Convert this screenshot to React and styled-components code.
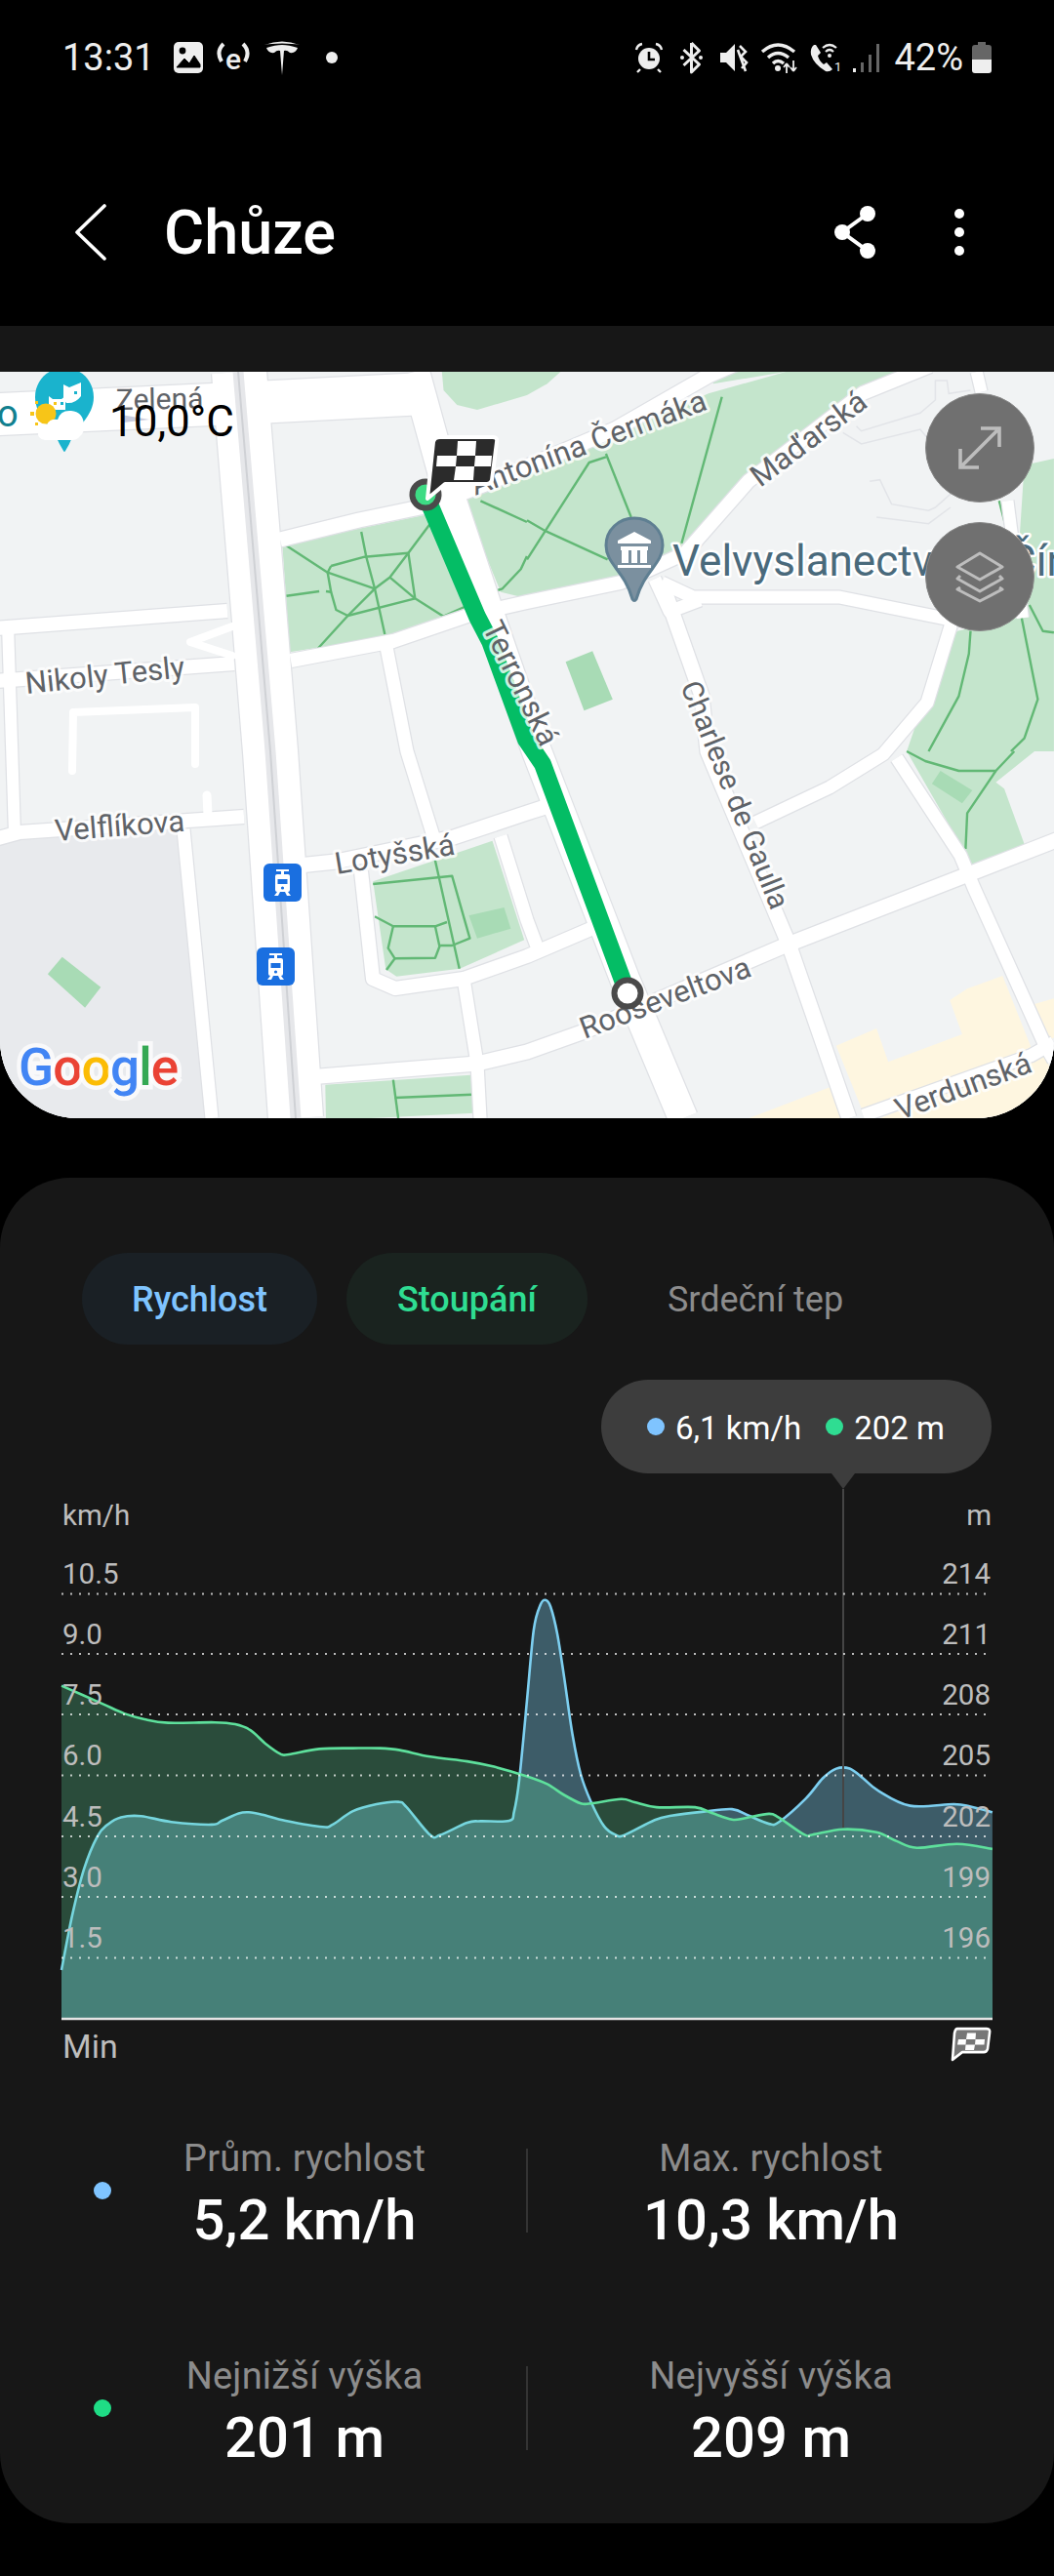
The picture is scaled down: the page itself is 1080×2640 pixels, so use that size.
import styled, { createGlobalStyle } from "styled-components";

const GlobalStyle = createGlobalStyle`
  html, body { margin: 0; padding: 0; background: #000; }
  * { box-sizing: border-box; }
`;

const Page = styled.div`
  width: 1080px;
  height: 2640px;
  background: #000;
  overflow: hidden;
  font-family: Roboto, "Noto Sans", sans-serif;
  color: #fff;
`;

const StatusBar = styled.div`
  height: 118px;
  padding: 0 64px;
  display: flex;
  align-items: center;
`;

const Clock = styled.span`
  font-size: 38px;
  margin-right: 19px;
  color: #eee;
  white-space: nowrap;
`;

const StatusGroup = styled.div`
  display: flex;
  align-items: center;
  gap: ${(p) => p.$gap || 12}px;
  margin-left: ${(p) => (p.$right ? "auto" : "0")};
  svg { display: block; }
`;

const Percent = styled.span`
  font-size: 38px;
  margin-left: 3px;
  color: #eee;
  white-space: nowrap;
`;

const AppBar = styled.header`
  height: 216px;
  padding: 24px 0 0 74px;
  display: flex;
  align-items: center;
  svg { display: block; }
`;

const Title = styled.h1`
  margin: 0 0 0 56px;
  font-size: 63px;
  font-weight: 500;
`;

const AppBarActions = styled.div`
  margin-left: auto;
  margin-right: 91px;
  display: flex;
  align-items: center;
  gap: 79px;
`;

const Band = styled.div`
  height: 47px;
  background: #171717;
`;

const MapPanel = styled.section`
  position: relative;
  height: 765px;
  overflow: hidden;
  border-radius: 0 0 80px 80px;
  background: #f1f3f4;
  svg { display: block; }
`;

const Temperature = styled.span`
  position: absolute;
  left: 112px;
  top: 26px;
  font-size: 44px;
  line-height: 50px;
  color: #000;
`;

const RoundButton = styled.div`
  position: absolute;
  right: 20px;
  top: ${(p) => p.$top}px;
  width: 112px;
  height: 112px;
  border-radius: 50%;
  background: #707070;
  border: 1px solid #8a8a8a;
  display: flex;
  align-items: center;
  justify-content: center;
`;

const GoogleMark = styled.div`
  position: absolute;
  left: 19px;
  bottom: 22px;
  font-size: 53px;
  font-weight: 500;
  line-height: 60px;
  letter-spacing: -0.8px;
  -webkit-text-stroke: 9px rgba(255, 255, 255, 0.72);
  paint-order: stroke fill;
`;

const GoogleLetter = styled.span`
  color: ${(p) => p.$color};
  paint-order: stroke fill;
`;

const Card = styled.section`
  margin-top: 61px;
  background: #171717;
  border-radius: 72px;
  padding: 77px 0 56px;
`;

const Tabs = styled.div`
  display: flex;
  gap: 30px;
  padding-left: 84px;
`;

const Tab = styled.div`
  height: 94px;
  padding: 2px ${(p) => p.$pad}px 0;
  border-radius: 47px;
  background: ${(p) => p.$bg || "transparent"};
  color: ${(p) => p.$color};
  font-size: 36px;
  font-weight: ${(p) => p.$weight || 500};
  display: flex;
  align-items: center;
`;

const TooltipRow = styled.div`
  margin-top: 36px;
  padding-right: 64px;
  display: flex;
  justify-content: flex-end;
`;

const Tooltip = styled.div`
  position: relative;
  width: 400px;
  height: 96px;
  padding-left: 47px;
  border-radius: 48px;
  background: #3d3d3d;
  display: flex;
  align-items: center;
  font-size: 33px;

  &::after {
    content: "";
    position: absolute;
    left: 236px;
    top: 96px;
    border: 12px solid transparent;
    border-top: 16px solid #3d3d3d;
    border-bottom: 0;
  }
`;

const Dot = styled.span`
  flex: none;
  width: 18px;
  height: 18px;
  border-radius: 50%;
  background: ${(p) => p.$color};
`;

const TipValue = styled.span`
  margin: 2px ${(p) => p.$after || 0}px 0 11px;
  white-space: nowrap;
`;

const Chart = styled.svg`
  display: block;
  width: 1080px;
  height: 561px;
`;

const AxisFoot = styled.div`
  height: 47px;
  padding: 5px 64px 0;
  display: flex;
  justify-content: space-between;
  align-items: flex-start;
  font-size: 34px;
  line-height: 42px;
  color: #bdbdbd;
  svg { display: block; margin-top: 1px; }
`;

const Stats = styled.div`
  margin-top: 73px;
  display: flex;
  flex-direction: column;
  gap: 107px;
`;

const StatRow = styled.div`
  height: 116px;
  padding-left: 84px;
  display: flex;
  align-items: flex-start;
`;

const DotCell = styled.div`
  width: 42px;
  margin-top: 45px;
  display: flex;
  justify-content: center;
`;

const Stat = styled.div`
  width: ${(p) => p.$width}px;
  text-align: center;
`;

const StatLabel = styled.div`
  font-size: 38px;
  line-height: 42px;
  letter-spacing: 0.2px;
  color: #8c8c8c;
  white-space: nowrap;
`;

const StatValue = styled.div`
  margin-top: 10px;
  font-size: 58px;
  line-height: 64px;
  font-weight: 500;
  white-space: nowrap;
`;

const Divider = styled.div`
  width: 2px;
  height: 86px;
  margin: 11px 0 0 41px;
  background: #333;
`;

// zoom crop -> page px
const at = (ox, oy, ky = 3) => (x, y) => [ox + x / 2.904, oy + y / ky];
const A = at(0, 370);
const B = at(540, 370);
const C = at(0, 770);
const D = at(540, 770);
const L = at(0, 1520, 2.529);
const R = at(540, 1520, 2.529);

const toD = (pts, close) =>
  "M" + pts.map((p) => p[0].toFixed(1) + " " + p[1].toFixed(1)).join("L") + (close ? "Z" : "");

const pts = (f, list) => list.map((p) => f(p[0], p[1]));

// catmull-rom through the points
const smooth = (p) => {
  let d = `M${p[0][0].toFixed(1)} ${p[0][1].toFixed(1)}`;
  for (let i = 0; i < p.length - 1; i++) {
    const p0 = p[i - 1] || p[i];
    const p1 = p[i];
    const p2 = p[i + 1];
    const p3 = p[i + 2] || p2;
    const c1 = [p1[0] + (p2[0] - p0[0]) / 6, p1[1] + (p2[1] - p0[1]) / 6];
    const c2 = [p2[0] - (p3[0] - p1[0]) / 6, p2[1] - (p3[1] - p1[1]) / 6];
    d += `C${c1[0].toFixed(1)} ${c1[1].toFixed(1)} ${c2[0].toFixed(1)} ${c2[1].toFixed(1)} ${p2[0].toFixed(1)} ${p2[1].toFixed(1)}`;
  }
  return d;
};

const parks = [
  pts(A, [[840, 563], [1280, 470], [1385, 760], [1170, 845], [862, 895]]),
  [...pts(A, [[1315, 33], [1320, 90], [1360, 135], [1420, 150], [1568, 105]]), ...pts(B, [[60, 70], [100, 33]])],
  [...pts(A, [[1375, 420], [1490, 710]]), ...pts(B, [[0, 730], [280, 670], [470, 560], [660, 360], [1000, 75], [1120, 33], [770, 33], [540, 100], [0, 345]])],
  pts(B, [[540, 33], [555, 70], [770, 33]]),
  [...pts(B, [[1480, 320], [1568, 300], [1568, 1200]]), ...pts(D, [[1510, 0], [1395, 95], [1420, 115], [1485, 300], [1330, 360], [1130, 0]]), ...pts(B, [[1200, 990], [1280, 830], [1450, 790]])],
  pts(C, [[1110, 400], [1465, 275], [1560, 580], [1368, 668], [1180, 692], [1148, 670]]),
  pts(C, [[968, 1025], [1400, 995], [1412, 1112], [970, 1135]]),
];

const patches = [
  pts(B, [[115, 925], [195, 892], [255, 1040], [170, 1075]]),
  pts(C, [[185, 632], [300, 725], [253, 788], [142, 685]]),
  pts(C, [[1395, 505], [1500, 480], [1520, 545], [1420, 575]]),
  pts(D, [[1230, 60], [1325, 120], [1295, 160], [1205, 100]]),
];

const sand = [
  pts(D, [[920, 905], [1040, 852], [1075, 955], [1295, 870], [1258, 765], [1310, 730], [1415, 690], [1500, 910], [1000, 1110]]),
  pts(D, [[660, 1128], [920, 1025], [950, 1128]]),
  pts(D, [[1500, 780], [1568, 760], [1568, 880], [1540, 900]]),
  pts(D, [[1050, 1128], [1550, 930], [1568, 1128]]),
];

const parkPaths = [
  pts(A, [[848, 565], [975, 650], [1115, 700]]),
  pts(A, [[985, 630], [1085, 602], [1215, 590], [1235, 730], [1320, 785], [1385, 755]]),
  pts(A, [[1075, 525], [1090, 602], [1115, 700], [1145, 840]]),
  pts(A, [[985, 630], [975, 650], [985, 710], [1000, 765], [1035, 783], [1235, 730]]),
  pts(A, [[1280, 500], [1215, 590], [1160, 665], [1115, 700], [1035, 783], [945, 885]]),
  pts(A, [[1160, 665], [1235, 730]]),
  pts(A, [[852, 722], [950, 708]]),
  pts(A, [[970, 708], [985, 710]]),
  pts(B, [[580, 110], [460, 560]]),
  pts(B, [[235, 285], [310, 480]]),
  pts(B, [[235, 295], [185, 312], [0, 610]]),
  pts(A, [[1480, 705], [1495, 700], [1550, 640], [1568, 600]]),
  pts(B, [[0, 490], [50, 520], [240, 610]]),
  pts(A, [[1430, 430], [1568, 495]]),
  pts(B, [[1320, 830], [1315, 900], [1285, 1030], [1195, 1200]]),
  pts(D, [[1130, 0], [1185, 30], [1285, 60], [1395, 60], [1450, 0]]),
  pts(D, [[1395, 60], [1310, 190], [1305, 300]]),
  pts(B, [[1470, 780], [1520, 1040], [1480, 1160], [1440, 1200]]),
  pts(B, [[1495, 750], [1535, 830], [1568, 835]]),
  pts(B, [[1405, 430], [1425, 510]]),
  pts(C, [[1110, 408], [1345, 383], [1398, 575], [1345, 597], [1310, 597]]),
  pts(C, [[1295, 335], [1367, 668]]),
  pts(C, [[1115, 508], [1170, 538], [1295, 538], [1330, 525]]),
  pts(C, [[1170, 538], [1155, 605], [1175, 637], [1295, 635], [1308, 600], [1295, 538]]),
  pts(C, [[1175, 637], [1150, 672]]),
  pts(C, [[1170, 1010], [1185, 1128]]),
  pts(C, [[1175, 1065], [1405, 1055]]),
];

const roads = [
  { w: 43, p: [[-10, 425], [272, 412], [425, 404]] },
  { w: 56, p: [[245, 381], [277, 770], [303, 1146]] },
  { w: 15, p: [[287, 553], [368, 533], [440, 518], [500, 495], [630, 440], [726, 385], [760, 370]] },
  { w: 14, p: [[298, 677], [403, 657], [482, 630], [540, 617], [636, 597], [702, 567], [767, 493], [884, 403], [953, 375]] },
  { w: 13, p: [[678, 597], [710, 612], [860, 612], [974, 635], [974, 642], [950, 720], [905, 773], [850, 807], [774, 843]] },
  { w: 13, p: pts(B, [[380, 670], [425, 770], [515, 735]]) },
  { w: 15, p: [[678, 597], [719, 713], [725, 770], [808, 967], [870, 1146]] },
  { w: 30, p: [[425, 381], [455, 490], [505, 640], [550, 770], [640, 1003], [700, 1146]] },
  { w: 15, p: [[303, 1105], [489, 1090], [540, 1078], [599, 1057], [802, 970], [1090, 858]] },
  { w: 15, p: [[306, 887], [344, 883], [465, 858], [540, 833], [565, 825]] },
  { w: 14, p: [[610, 950], [540, 980], [475, 1003], [405, 1013], [382, 1003], [370, 893]] },
  { w: 13, p: [[475, 1003], [489, 1090], [492, 1146]] },
  { w: 13, p: [[396, 663], [417, 770], [444, 857]] },
  { w: 13, p: [[513, 857], [540, 943], [552, 975]] },
  { w: 14, p: [[-5, 644], [233, 626]] },
  { w: 14, p: [[-5, 698], [240, 680]] },
  { w: 14, p: [[-5, 860], [20, 853], [250, 837]] },
  { w: 12, p: [[8, 640], [15, 855]] },
  { w: 13, p: [[188, 850], [217, 1146]] },
  { w: 13, p: pts(D, [[1100, 20], [1290, 320], [1330, 420], [1540, 900], [1568, 950]]) },
  { w: 13, p: pts(D, [[1000, 1120], [1500, 935], [1568, 895]]) },
  { w: 12, p: pts(B, [[1338, 33], [1352, 95]]) },
  { w: 12, p: pts(B, [[1430, 430], [1475, 790]]) },
];

const courtyards = [
  { w: 8, p: [[200, 783], [200, 725], [75, 730], [74, 790]] },
  { w: 9, p: [[212, 815], [213, 835]] },
  { w: 8, p: [[238, 642], [195, 658], [238, 672]] },
];

const blockLines = [
  pts(B, [[1020, 370], [1050, 365], [1085, 440], [1195, 460], [1215, 450], [1270, 400]]),
  pts(B, [[940, 220], [995, 255], [1170, 210], [1190, 235]]),
  pts(B, [[980, 200], [995, 215], [1170, 160], [1215, 120], [1215, 60], [1250, 60], [1255, 100], [1320, 90]]),
  pts(B, [[1040, 480], [1195, 500], [1260, 450]]),
];

const route = [[436, 507], [489, 632], [502, 657], [539, 758], [556, 783], [643, 1018]];

const streetLabels = [
  { t: "Nikoly Tesly", x: 27, y: 711, r: -6, s: 31 },
  { t: "Velflíkova", x: 57, y: 862, r: -4.5, s: 31 },
  { t: "Lotyšská", x: 345, y: 896, r: -9.5, s: 31 },
  { t: "Antonína Čermáka", x: 487, y: 508, r: -20.4, s: 31 },
  { t: "Maďarská", x: 779, y: 500, r: -37, s: 31 },
  { t: "Terronská", x: 494, y: 643, r: 64, s: 31 },
  { t: "Charlese de Gaulla", x: 697, y: 703, r: 68, s: 30 },
  { t: "Rooseveltova", x: 599, y: 1065, r: -20.7, s: 31 },
  { t: "Verdunská", x: 922, y: 1148, r: -20, s: 31 },
];

const TramStop = ({ x, y }) => (
  <g transform={`translate(${x} ${y})`}>
    <rect width="39" height="39" rx="6" fill="#1a6fe0" />
    <path d="M13 6h13v2h-5v3h4q2 0 2 2v14q0 2-2 2h-11q-2 0-2-2v-14q0-2 2-2h4v-3h-5z" fill="#fff" />
    <rect x="14.5" y="16" width="10" height="5" fill="#1a6fe0" />
    <circle cx="19.5" cy="25" r="1.6" fill="#1a6fe0" />
    <path d="M14 29l-3 4h4l2-4zM25 29l3 4h-4l-2-4z" fill="#fff" />
  </g>
);

const MapDrawing = () => (
  <svg width="1080" height="765" viewBox="0 381 1080 765">
    <rect x="0" y="381" width="1080" height="765" fill="#f1f3f4" />
    <path d="M0 862L20 855L183 845L211 1146L0 1146Z" fill="#e8eaed" />
    {sand.map((p, i) => <path key={i} d={toD(p, true)} fill="#fef6e0" />)}
    {parks.map((p, i) => <path key={i} d={toD(p, true)} fill="#c4e5cc" />)}
    {patches.map((p, i) => <path key={i} d={toD(p, true)} fill="#a8dbb5" />)}
    <g fill="none" stroke="#62b875" strokeWidth="2.4" strokeLinejoin="round">
      {parkPaths.map((p, i) => <path key={i} d={toD(p)} />)}
    </g>
    <g fill="none" stroke="#e2e4e8" strokeWidth="1.5">
      {blockLines.map((p, i) => <path key={i} d={toD(p)} />)}
    </g>
    <g fill="none" stroke="#dfe1e5" strokeLinejoin="round">
      {roads.map((r, i) => <path key={i} d={toD(r.p)} strokeWidth={r.w + 2.5} />)}
    </g>
    <g fill="none" stroke="#fff" strokeLinejoin="round">
      {roads.map((r, i) => <path key={i} d={toD(r.p)} strokeWidth={r.w} />)}
    </g>
    <g fill="none" stroke="#fff" strokeLinecap="round" strokeLinejoin="round">
      {courtyards.map((r, i) => <path key={i} d={toD(r.p)} strokeWidth={r.w} />)}
    </g>
    <path d="M244 381L277 770L303 1146" fill="none" stroke="#e6e7ea" strokeWidth="11" />
    <path d="M244 381L277 770L303 1146" fill="none" stroke="#cfd1d5" strokeWidth="2" />

    <path d={toD(pts(A, [[360, 165], [445, 180], [360, 190]]), true)} fill="#c8cbdc" />

    <path d={toD(route)} fill="none" stroke="#04bd65" strokeWidth="18" strokeLinejoin="round" />

    <g fontFamily="Roboto, sans-serif" fill="#5f6368" stroke="#fff" strokeWidth="6" strokeOpacity="0.8" strokeLinejoin="round" paintOrder="stroke">
      {streetLabels.map((l) => (
        <text key={l.t} x={l.x} y={l.y} fontSize={l.s} transform={`rotate(${l.r} ${l.x} ${l.y})`}>{l.t}</text>
      ))}
    </g>
    <text x="119" y="420" fontFamily="Roboto, sans-serif" fontSize="30" fill="#5f6368" transform="rotate(-1 119 420)">Zelená</text>
    <g fontFamily="Roboto, sans-serif" fontSize="44" fill="#4a6a7c" stroke="#fff" strokeWidth="5" strokeLinejoin="round" paintOrder="stroke">
      <text x="689" y="590">Velvyslanectví</text>
      <text x="1033" y="590">Čína</text>
    </g>

    <circle cx="643" cy="1018" r="13.5" fill="#fff" stroke="#4a4a4a" strokeWidth="6" />
    <circle cx="436" cy="507" r="13.5" fill="#3ddc84" stroke="#4a4a4a" strokeWidth="6" />
    <path d="M451 448H505Q510 448 509 453L504 492Q503 496 499 496H456L438 511L444 453Q445 448 451 448Z" fill="#2b2b2b" stroke="#fff" strokeWidth="4" strokeLinejoin="round" />
    <g fill="#fff">
      <path d="M469 452H488L487 467H468Z" />
      <path d="M448 467H468L467 478H447Z" />
      <path d="M487 467H504L503 478H486Z" />
      <path d="M467 478H486L485 492H465Z" />
    </g>

    {/* embassy pin */}
    <path d="M650 531c-16 0-29 12-29 28 0 19 19 26 27 55q2 3 4 0c8-29 27-36 27-55 0-16-13-28-29-28z" fill="#7b909f" stroke="#5f7f92" strokeWidth="3" />
    <g fill="#fff">
      <path d="M650 545l17 9v3h-34v-3z" />
      <rect x="636" y="560" width="28" height="4" />
      <rect x="637" y="564" width="7" height="13" />
      <rect x="647" y="564" width="6" height="13" />
      <rect x="656" y="564" width="7" height="13" />
      <rect x="633" y="579" width="34" height="3" />
    </g>

    <TramStop x={270} y={885} />
    <TramStop x={263} y={971} />

    {/* weather pin */}
    <text x="-3" y="437" fontFamily="Roboto, sans-serif" fontSize="38" fill="#12808f">o</text>
    <path d="M66 377c-17 0-30 13-30 30 0 20 18 30 25 48l4 7q1 2 2 0l4-7c7-18 25-28 25-48 0-17-13-30-30-30z" fill="#1ab3cd" />
    <path d="M65 394l6 3 12-5v14q-6 8-15 7l-3-4z" fill="#fff" />
    <path d="M50 406l4 3h9l4-3v14h-17z" fill="#fff" />
    <rect x="55" y="412" width="3" height="3" fill="#f7c518" />
    <rect x="62" y="412" width="3" height="3" fill="#1ab3cd" />
    <rect x="76" y="401" width="3" height="3" fill="#1ab3cd" />
    <circle cx="47" cy="424" r="10.5" fill="#f7c518" />
    <g fill="#f7c518">
      <rect x="31" y="422" width="4" height="4" />
      <rect x="36" y="433" width="3" height="3" />
      <rect x="36" y="411" width="3" height="3" />
    </g>
    <path d="M46 451q-8-1-7-9 1-8 9-7 3-6 11-5 3-10 14-9 12 1 13 14 1 8-4 12-3 4-8 4z" fill="#fff" />
  </svg>
);

const blueLine = [
  ...pts(L, [[183, 1262], [215, 1120], [250, 1000], [290, 915], [320, 885], [360, 866], [420, 863], [510, 878], [630, 885], [660, 875], [710, 856], [740, 853], [780, 859], [850, 875], [960, 891], [990, 885], [1050, 850], [1120, 832], [1185, 826], [1210, 840], [1280, 912], [1310, 912], [1390, 880], [1430, 876], [1515, 875], [1530, 850], [1545, 770], [1568, 565]]),
  ...pts(R, [[20, 380], [40, 315], [55, 303], [70, 320], [90, 390], [110, 500], [135, 650], [160, 755], [190, 825], [230, 890], [265, 912], [290, 912], [380, 873], [430, 862], [520, 852], [610, 845], [660, 862], [720, 883], [750, 878], [830, 817], [880, 765], [920, 740], [960, 740], [1000, 765], [1045, 797], [1140, 836], [1270, 832], [1320, 838], [1385, 853]]),
];

const greenLine = [
  ...pts(L, [[183, 525], [300, 570], [370, 597], [430, 612], [500, 621], [640, 620], [700, 625], [745, 640], [790, 675], [835, 702], [860, 703], [950, 689], [1050, 687], [1130, 687], [1190, 692], [1280, 709], [1390, 721], [1470, 735]]),
  ...pts(R, [[0, 760], [60, 780], [110, 808], [160, 830], [190, 830], [280, 819], [320, 827], [385, 840], [500, 840], [550, 855], [610, 872], [650, 868], [720, 857], [750, 867], [825, 911], [850, 911], [940, 897], [1040, 905], [1100, 928], [1160, 945], [1280, 935], [1385, 948]]),
];

const CHART_LEFT = 63;
const CHART_RIGHT = 1017;
const BASELINE = 2068;

const closeArea = (d) => `${d}L${CHART_RIGHT} ${BASELINE}L${CHART_LEFT} ${BASELINE}Z`;

const gridLines = [
  { y: 1633.5, km: "10.5", m: "214" },
  { y: 1695, km: "9.0", m: "211" },
  { y: 1757, km: "7.5", m: "208" },
  { y: 1819.5, km: "6.0", m: "205" },
  { y: 1882, km: "4.5", m: "202" },
  { y: 1944, km: "3.0", m: "199" },
  { y: 2006.5, km: "1.5", m: "196" },
];

const SpeedChart = () => (
  <Chart viewBox="0 1510 1080 561">
    <path d={closeArea(smooth(blueLine))} fill="rgba(132,220,255,.35)" />
    <path d={smooth(blueLine)} fill="none" stroke="#7dcff0" strokeWidth="2.6" />
    <path d={closeArea(smooth(greenLine))} fill="rgba(99,235,167,.25)" />
    <path d={smooth(greenLine)} fill="none" stroke="#5ee09c" strokeWidth="2.6" />
    <path d="M864 1526V1873" stroke="#454545" strokeWidth="2" />
    <g stroke="#fff" strokeOpacity="0.72" strokeWidth="2" strokeDasharray="2 7">
      {gridLines.map((g) => <path key={g.y} d={`M63 ${g.y}H1010`} />)}
    </g>
    <path d={`M63 ${BASELINE + 1}H1017`} stroke="#e4e4e4" strokeWidth="2.5" />
    <g fontFamily="Roboto, sans-serif" fontSize="29.5" fill="#bdbdbd">
      <text x="64" y="1563">km/h</text>
      <text x="1016" y="1563" textAnchor="end">m</text>
      {gridLines.map((g) => (
        <g key={g.y}>
          <text x="64" y={g.y - 10.5}>{g.km}</text>
          <text x="1015" y={g.y - 10.5} textAnchor="end">{g.m}</text>
        </g>
      ))}
    </g>
  </Chart>
);

const FinishFlag = () => (
  <svg width="42" height="36" viewBox="0 0 42 33" preserveAspectRatio="none">
    <path d="M7 2H37Q41 2 40 6L38 21Q37 24 34 24H12L2 31L4 6Q5 2 7 2Z" fill="#777" stroke="#fff" strokeWidth="2.6" strokeLinejoin="round" />
    <g fill="#fff">
      <path d="M17 6H26L25.500 12H16Z" />
      <path d="M8 12H16L15.500 17H7Z" />
      <path d="M25.500 12H35L34.500 17H25Z" />
      <path d="M15.500 17H25L24 22H15Z" />
    </g>
  </svg>
);

const stats = [
  { color: "#7fc4ff", a: ["Prům. rychlost", "5,2 km/h"], b: ["Max. rychlost", "10,3 km/h"] },
  { color: "#1fdc85", a: ["Nejnižší výška", "201 m"], b: ["Nejvyšší výška", "209 m"] },
];

export default function App() {
  return (
    <Page>
      <GlobalStyle />
      <StatusBar>
        <Clock>13:31</Clock>
        <StatusGroup $gap={13}>
          <svg width="30" height="32" viewBox="0 0 30 32">
            <rect width="30" height="32" rx="5" fill="#eee" />
            <circle cx="9" cy="9" r="3.4" fill="#000" />
            <path d="M3 26l8-9 5 5 5-8 6 9v3H3z" fill="#000" stroke="#000" strokeWidth="1" />
          </svg>
          <svg width="36" height="32" viewBox="0 0 36 32">
            <text x="18" y="28" textAnchor="middle" fontFamily="Roboto, sans-serif" fontSize="30" fontWeight="500" fill="#eee">e</text>
            <path d="M8 2Q0 10 6 20M28 2Q36 10 30 20" fill="none" stroke="#eee" strokeWidth="4" />
          </svg>
          <svg width="38" height="36" viewBox="0 0 38 36">
            <path d="M1 5Q19-2 37 5Q30 3.500 19 3.500Q8 3.500 1 5Z" fill="#eee" />
            <path d="M3 8Q12 5 19 5Q26 5 35 8Q33 14 27 13Q24 10 21 11L19 36L17 11Q14 10 11 13Q5 14 3 8Z" fill="#eee" />
          </svg>
          <svg width="12" height="12" viewBox="0 0 12 12" style={{ marginLeft: 13 }}>
            <circle cx="6" cy="6" r="6" fill="#eee" />
          </svg>
        </StatusGroup>
        <StatusGroup $right $gap={11}>
          <svg width="30" height="32" viewBox="0 0 30 32">
            <circle cx="15" cy="17" r="11" fill="#eee" />
            <path d="M15 10v8h6" fill="none" stroke="#000" strokeWidth="2.6" />
            <path d="M2 8Q3 3 8 2M28 8Q27 3 22 2M6 28l-3 3M24 28l3 3" fill="none" stroke="#eee" strokeWidth="2.4" />
          </svg>
          <svg width="27" height="34" viewBox="0 0 27 34" style={{ marginLeft: 4 }}>
            <path d="M13.500 2v30l8-8-16-15M13.500 2l8 8-16 15" fill="none" stroke="#eee" strokeWidth="3" strokeLinejoin="round" />
            <circle cx="4" cy="17" r="2" fill="#eee" />
            <circle cx="23" cy="17" r="2" fill="#eee" />
          </svg>
          <svg width="31" height="32" viewBox="0 0 31 32" style={{ marginLeft: 4 }}>
            <path d="M1 11h6l9-9v28l-9-9H1z" fill="#eee" />
            <path d="M21 4l6 6-5 5 6 6-5 6M19 8l8 22" fill="none" stroke="#eee" strokeWidth="2.6" />
          </svg>
          <svg width="40" height="34" viewBox="0 0 40 34">
            <path d="M2 11Q18-3 35 11M8 17Q18 8 29 17M13 23Q18 18 24 23" fill="none" stroke="#eee" strokeWidth="3.4" />
            <circle cx="18" cy="28" r="3" fill="#eee" />
            <path d="M27 33V23M27 23l-3 4M27 23l3 4M34 20v11M34 31l-3-4M34 31l3-4" fill="none" stroke="#eee" strokeWidth="1.8" />
          </svg>
          <svg width="32" height="32" viewBox="0 0 32 32">
            <path d="M4 3q-4 3-3 10 3 10 15 17 4 1 7-2l-6-7-3 2q-5-4-6-9l3-3-5-8z" fill="#eee" />
            <path d="M13 6Q20 0 27 6M16 10Q20 6 24 10" fill="none" stroke="#eee" strokeWidth="2.2" />
            <circle cx="20" cy="14" r="2" fill="#eee" />
            <text x="25" y="30" fontFamily="Roboto, sans-serif" fontSize="13" fill="#eee">1</text>
          </svg>
          <svg width="29" height="32" viewBox="0 0 29 32">
            <rect x="1" y="27" width="3" height="4" fill="#eee" />
            <rect x="9" y="21" width="3" height="10" fill="#666" />
            <rect x="17" y="13" width="3" height="18" fill="#666" />
            <rect x="25" y="2" width="3" height="29" fill="#666" />
          </svg>
          <Percent>42%</Percent>
          <svg width="20" height="32" viewBox="0 0 20 32" style={{ marginLeft: -2 }}>
            <path d="M6 0h8v3h3q3 0 3 3v12H0V6q0-3 3-3h3z" fill="#666" />
            <path d="M0 18h20v11q0 3-3 3H3q-3 0-3-3z" fill="#eee" />
          </svg>
        </StatusGroup>
      </StatusBar>

      <AppBar>
        <svg width="38" height="58" viewBox="0 0 38 58">
          <path d="M33 2L5 29L33 56" fill="none" stroke="#fff" strokeWidth="3.6" strokeLinecap="round" strokeLinejoin="round" />
        </svg>
        <Title>Chůze</Title>
        <AppBarActions>
          <svg width="44" height="56" viewBox="0 0 44 56">
            <circle cx="35" cy="9" r="8" fill="#fff" />
            <circle cx="9" cy="28" r="8" fill="#fff" />
            <circle cx="35" cy="47" r="8" fill="#fff" />
            <path d="M35 9L9 28L35 47" fill="none" stroke="#fff" strokeWidth="4" />
          </svg>
          <svg width="12" height="50" viewBox="0 0 12 50">
            <circle cx="6" cy="6" r="5" fill="#fff" />
            <circle cx="6" cy="25" r="5" fill="#fff" />
            <circle cx="6" cy="44" r="5" fill="#fff" />
          </svg>
        </AppBarActions>
      </AppBar>

      <Band />

      <MapPanel>
        <MapDrawing />
        <Temperature>10,0°C</Temperature>
        <RoundButton $top={22}>
          <svg width="50" height="50" viewBox="0 0 50 50">
            <path d="M7 43L43 7M26 5H45V24M5 26V45H24" fill="none" stroke="#bdbdbd" strokeWidth="3.6" />
          </svg>
        </RoundButton>
        <RoundButton $top={154}>
          <svg width="52" height="54" viewBox="0 0 52 54">
            <path d="M26 3L49 17L26 30L3 17Z" fill="none" stroke="#bdbdbd" strokeWidth="3" strokeLinejoin="round" />
            <path d="M6 26L3 29L26 42L49 29L46 26M6 38L3 40L26 52L49 40L46 38" fill="none" stroke="#bdbdbd" strokeWidth="3" strokeLinejoin="round" />
          </svg>
        </RoundButton>
        <GoogleMark>
          <GoogleLetter $color="#4285f4">G</GoogleLetter>
          <GoogleLetter $color="#ea4335">o</GoogleLetter>
          <GoogleLetter $color="#fbbc05">o</GoogleLetter>
          <GoogleLetter $color="#4285f4">g</GoogleLetter>
          <GoogleLetter $color="#34a853">l</GoogleLetter>
          <GoogleLetter $color="#ea4335">e</GoogleLetter>
        </GoogleMark>
      </MapPanel>

      <Card>
        <Tabs>
          <Tab $pad={51} $bg="#1a2025" $color="#7fc4ff">Rychlost</Tab>
          <Tab $pad={52} $bg="#1a231f" $color="#2fdd92">Stoupání</Tab>
          <Tab $pad={52} $color="#8c8c8c" $weight={400}>Srdeční tep</Tab>
        </Tabs>

        <TooltipRow>
          <Tooltip>
            <Dot $color="#7fc4ff" />
            <TipValue $after={25}>6,1 km/h</TipValue>
            <Dot $color="#2fdd92" />
            <TipValue>202 m</TipValue>
          </Tooltip>
        </TooltipRow>

        <SpeedChart />

        <AxisFoot>
          <span>Min</span>
          <FinishFlag />
        </AxisFoot>

        <Stats>
          {stats.map((row) => (
            <StatRow key={row.a[0]}>
              <DotCell><Dot $color={row.color} /></DotCell>
              <Stat $width={372}>
                <StatLabel>{row.a[0]}</StatLabel>
                <StatValue>{row.a[1]}</StatValue>
              </Stat>
              <Divider />
              <Stat $width={498}>
                <StatLabel>{row.b[0]}</StatLabel>
                <StatValue>{row.b[1]}</StatValue>
              </Stat>
            </StatRow>
          ))}
        </Stats>
      </Card>
    </Page>
  );
}
